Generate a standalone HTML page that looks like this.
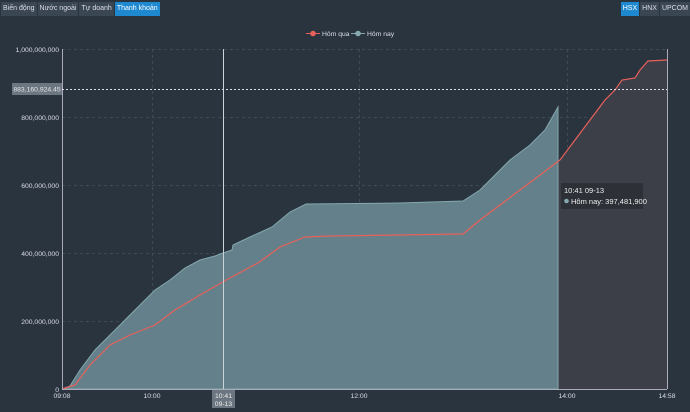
<!DOCTYPE html>
<html><head><meta charset="utf-8"><style>
body{margin:0;width:690px;height:412px;background:#29343f;font-family:"Liberation Sans",sans-serif;overflow:hidden;position:relative}
.tabs{position:absolute;top:2px;left:1px;display:flex;gap:1px}
.tabs span,.rt span{font-size:7px;color:#dde;background:#3a4651;padding:2px 2px;height:10px;line-height:10px;display:block}
.tabs span.a,.rt span.a{background:#1e88d0;color:#fff}
.rt{position:absolute;top:2px;right:0;display:flex;gap:1px}
svg{position:absolute;left:0;top:0}
</style></head><body>
<div class="tabs"><span>Biến động</span><span>Nước ngoài</span><span>Tự doanh</span><span class="a">Thanh khoản</span></div>
<div class="rt"><span class="a">HSX</span><span>HNX</span><span>UPCOM</span></div>
<svg width="690" height="412" font-family="Liberation Sans" font-size="6.8">
<g stroke="#3e4a56" stroke-dasharray="3,3" stroke-width="1">
<line x1="62" y1="49.5" x2="667" y2="49.5"/><line x1="62" y1="117.5" x2="667" y2="117.5"/><line x1="62" y1="185.5" x2="667" y2="185.5"/><line x1="62" y1="253.5" x2="667" y2="253.5"/><line x1="62" y1="321.5" x2="667" y2="321.5"/>
<line x1="152.5" y1="49" x2="152.5" y2="389"/><line x1="359.5" y1="49" x2="359.5" y2="389"/><line x1="567.5" y1="49" x2="567.5" y2="389"/>
</g>
<path d="M62,389 L75,385 L90,365 L110,345 L120,340 L130,335 L155,325 L175,310 L200,295 L228,279 L258,263 L280,247 L305,237 L330,236 L463,234 L480,220 L500,205 L520,190 L540,175 L560,160 L575,140 L590,120 L605,100 L615,90 L622,80 L635,78 L640,70 L648,61 L667,60 L667,389 Z" fill="#3d3f48"/>
<path d="M62,389 L70,386 L80,370 L95,350 L110,335 L125,320 L140,305 L155,290 L170,280 L185,268 L200,260 L215,256 L223,253 L232,250 L233,245 L250,237 L272,227 L290,212 L306,204 L400,203 L463,201 L480,190 L495,175 L510,160 L530,145 L545,130 L558,107 L558,389 Z" fill="#64808a" stroke="#85a8ae" stroke-width="1"/>
<path d="M62,389 L75,385 L90,365 L110,345 L120,340 L130,335 L155,325 L175,310 L200,295 L228,279 L258,263 L280,247 L305,237 L330,236 L463,234 L480,220 L500,205 L520,190 L540,175 L560,160 L575,140 L590,120 L605,100 L615,90 L622,80 L635,78 L640,70 L648,61 L667,60" fill="none" stroke="#e8605a" stroke-width="1.2"/>
<line x1="62.5" y1="49" x2="62.5" y2="389" stroke="#aab" />
<line x1="667.5" y1="49" x2="667.5" y2="389" stroke="#aab" />
<line x1="62" y1="389.5" x2="667" y2="389.5" stroke="#aab"/>
<line x1="223.5" y1="49" x2="223.5" y2="389" stroke="#c8d4d8"/>
<line x1="62" y1="89.5" x2="667" y2="89.5" stroke="#dde" stroke-dasharray="2,2"/>
<g fill="#dde" text-anchor="end">
<text x="59" y="52">1,000,000,000</text><text x="59" y="120">800,000,000</text><text x="59" y="188">600,000,000</text><text x="59" y="256">400,000,000</text><text x="59" y="324">200,000,000</text><text x="59" y="392">0</text>
</g>
<rect x="12" y="83" width="50" height="12" fill="#6b7680"/>
<text x="37" y="91.5" fill="#e6e6e6" text-anchor="middle">883,160,924.45</text>
<g fill="#dde" text-anchor="middle"><text x="62" y="398">09:08</text><text x="152" y="398">10:00</text><text x="359" y="398">12:00</text><text x="567" y="398">14:00</text><text x="667" y="398">14:58</text></g>
<rect x="212" y="390" width="23" height="18" fill="#6b7680"/>
<text x="223.5" y="398" fill="#eee" text-anchor="middle">10:41</text><text x="223.5" y="406" fill="#eee" text-anchor="middle">09-13</text>
<line x1="306" y1="33.5" x2="320" y2="33.5" stroke="#e8605a"/><circle cx="313" cy="33.5" r="2.8" fill="#e8605a"/>
<text x="322" y="36" fill="#dde">Hôm qua</text>
<line x1="351" y1="33.5" x2="365" y2="33.5" stroke="#85a8ae"/><circle cx="358" cy="33.5" r="2.8" fill="#85a8ae"/>
<text x="367" y="36" fill="#dde">Hôm nay</text>
<rect x="561" y="183" width="82" height="26" fill="#2b2f35" opacity="0.9"/>
<text x="564" y="193" fill="#eee" font-size="7.5">10:41 09-13</text>
<circle cx="566.5" cy="201" r="2.3" fill="#85a8ae"/>
<text x="571" y="204" fill="#eee" font-size="7.5">Hôm nay: 397,481,900</text>
</svg>
</body></html>
